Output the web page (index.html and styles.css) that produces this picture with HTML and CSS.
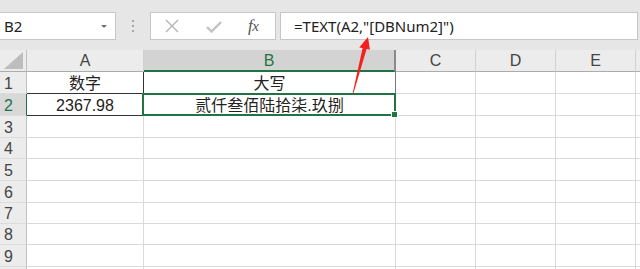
FILE: index.html
```html
<!DOCTYPE html>
<html>
<head>
<meta charset="utf-8">
<link rel="stylesheet" href="styles.css">
</head>
<body>
<div class="app">
  <div class="toolbar">
    <div class="namebox"><span class="nb-text">B2</span><i class="caret"></i></div>
    <div class="grip"><i></i><i></i><i></i></div>
    <div class="fbtns">
      <svg class="ico-x" width="14" height="14" viewBox="0 0 14 14"><path d="M1 1 L13 13 M13 1 L1 13" stroke="#b4b4b4" stroke-width="1.4" fill="none"/></svg>
      <svg class="ico-ok" width="16" height="12" viewBox="0 0 16 12"><path d="M1 6 L5.5 10.5 L15 1" stroke="#c2c2c2" stroke-width="2.4" fill="none"/></svg>
      <span class="fx">f<span class="fx-x">x</span></span>
    </div>
    <div class="finput">=TEXT(A2,"[DBNum2]")</div>
  </div>
  <div class="sheet">
    <div class="hd corner"><svg width="19" height="17" viewBox="0 0 19 17"><polygon points="0,17 19,17 19,0" fill="#bdbdbd"/></svg></div>
    <div class="hd col">A</div>
    <div class="hd col sel-col">B</div>
    <div class="hd col">C</div>
    <div class="hd col">D</div>
    <div class="hd col">E</div>
    <div class="hd col last"></div>

    <div class="rh">1</div>
    <div class="c a1">数字</div>
    <div class="c b1">大写</div>
    <div class="c"></div><div class="c"></div><div class="c"></div><div class="c last"></div>

    <div class="rh sel-row">2</div>
    <div class="c a2">2367.98</div>
    <div class="c b2">贰仟叁佰陆拾柒.玖捌</div>
    <div class="c"></div><div class="c"></div><div class="c"></div><div class="c last"></div>

    <div class="rh">3</div><div class="c"></div><div class="c"></div><div class="c"></div><div class="c"></div><div class="c"></div><div class="c last"></div>
    <div class="rh">4</div><div class="c"></div><div class="c"></div><div class="c"></div><div class="c"></div><div class="c"></div><div class="c last"></div>
    <div class="rh">5</div><div class="c"></div><div class="c"></div><div class="c"></div><div class="c"></div><div class="c"></div><div class="c last"></div>
    <div class="rh">6</div><div class="c"></div><div class="c"></div><div class="c"></div><div class="c"></div><div class="c"></div><div class="c last"></div>
    <div class="rh">7</div><div class="c"></div><div class="c"></div><div class="c"></div><div class="c"></div><div class="c"></div><div class="c last"></div>
    <div class="rh">8</div><div class="c"></div><div class="c"></div><div class="c"></div><div class="c"></div><div class="c"></div><div class="c last"></div>
    <div class="rh">9</div><div class="c"></div><div class="c"></div><div class="c"></div><div class="c"></div><div class="c"></div><div class="c last"></div>
    <div class="rh"></div><div class="c"></div><div class="c"></div><div class="c"></div><div class="c"></div><div class="c"></div><div class="c last"></div>

    <div class="selection"></div>
    <div class="handle"></div>
  </div>
  <svg class="arrow" width="40" height="75" viewBox="0 0 40 75">
    <polygon points="28,7 29.9,19.8 26.6,19.0 13.4,63.6 12.6,63.4 22.6,18.0 19.2,17.4" fill="#f5201c"/>
  </svg>
</div>
</body>
</html>
```
FILE: styles.css
```css
* { box-sizing: border-box; }
html, body { margin: 0; padding: 0; }
body {
  width: 640px;
  height: 269px;
  overflow: hidden;
  background: #ffffff;
  font-family: "Liberation Sans", "Noto Sans CJK SC", sans-serif;
}
.app {
  position: relative;
  width: 640px;
  height: 269px;
  overflow: hidden;
}
.toolbar {
  height: 50px;
  background: #e6e6e6;
  display: flex;
  align-items: flex-start;
  padding-top: 12px;
}
.namebox {
  width: 116px;
  height: 28px;
  background: #fff;
  border: 1px solid #c6c6c6;
  border-left: none;
  display: flex;
  align-items: center;
  justify-content: space-between;
  padding: 0 8px 0 4px;
}
.nb-text {
  font-family: "Noto Sans", "Open Sans", sans-serif;
  font-size: 15px;
  color: #222;
}
.caret {
  width: 0;
  height: 0;
  border-left: 3px solid transparent;
  border-right: 3px solid transparent;
  border-top: 3px solid #707070;
  margin-top: 1px;
}
.grip {
  width: 34px;
  height: 28px;
  display: flex;
  flex-direction: column;
  align-items: center;
  justify-content: center;
  gap: 3px;
}
.grip i {
  width: 2px;
  height: 2px;
  background: #a8a8a8;
}
.fbtns {
  width: 126px;
  height: 28px;
  background: #fff;
  border: 1px solid #c6c6c6;
  display: flex;
  align-items: center;
  padding-left: 14px;
}
.ico-x { margin-right: 27px; }
.ico-ok { margin-right: 26px; margin-top: 1px; }
.fx {
  font-family: "Liberation Serif", serif;
  font-style: italic;
  font-size: 17px;
  color: #555;
  letter-spacing: -0.5px;
}
.fx-x { font-size: 15px; }
.finput {
  margin-left: 4px;
  width: 358px;
  height: 28px;
  background: #fff;
  border: 1px solid #c6c6c6;
  font-family: "Noto Sans", "Open Sans", sans-serif;
  font-size: 15px;
  color: #222;
  line-height: 26px;
  padding-left: 13px;
}
.sheet {
  position: relative;
  display: grid;
  grid-template-columns: 27px 117px 252px 80px 80px 80px 4px;
  grid-template-rows: 22px 22px 22px 22px 21px 22px 22px 21px 21px 22px 22px;
}
.hd {
  background: #ececec;
  border-right: 1px solid #d0d0d0;
  border-bottom: 1px solid #acacac;
  color: #444;
  font-size: 16px;
  display: flex;
  align-items: center;
  justify-content: center;
  line-height: 20px;
  padding-top: 1px;
}
.corner {
  border-right: 1px solid #c0c0c0;
  justify-content: flex-end;
  align-items: flex-end;
  padding: 0 3px 2px 0;
}
.corner svg { display: block; }
.hd.last { border-right: none; }
.sel-col {
  background: #d3d3d3;
  color: #217346;
  border-bottom-color: #217346;
  box-shadow: inset 0 -1px 0 #217346;
  border-right: 2px solid #8a8a8a;
}
.rh {
  background: #ececec;
  border-right: 1px solid #c0c0c0;
  border-bottom: 1px solid #dcdcdc;
  color: #444;
  font-size: 16px;
  line-height: 14px;
  display: flex;
  align-items: flex-end;
  padding-left: 4px;
  padding-bottom: 2px;
}
.sel-row {
  background: #d8d8d8;
  color: #217346;
  border-right: 1px solid #217346;
}
.c {
  border-right: 1px solid #dadada;
  border-bottom: 1px solid #dadada;
  font-size: 16px;
  line-height: 14px;
  color: #222;
  display: flex;
  align-items: flex-end;
  justify-content: center;
  padding-bottom: 2px;
  white-space: nowrap;
}
.c.last { border-right: none; }
.a1 { border-right-color: #333; border-bottom-color: #333; }
.a2 { border-bottom-color: #333; }
.b1 { border-right: 1px solid #7a7a7a; }
.selection {
  position: absolute;
  left: 142px;
  top: 43px;
  width: 254px;
  height: 23px;
  border: 2px solid #217346;
}
.handle {
  position: absolute;
  left: 391px;
  top: 61px;
  width: 7px;
  height: 7px;
  background: #217346;
  border: 1px solid #fff;
}
.arrow {
  position: absolute;
  left: 340px;
  top: 30px;
}
```
